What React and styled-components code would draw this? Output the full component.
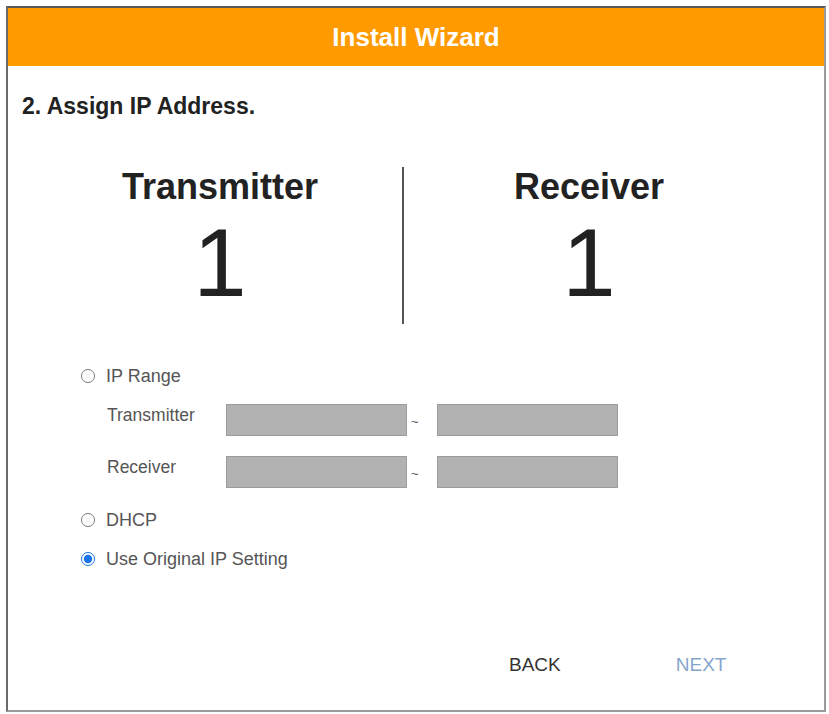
import React from "react";
import styled, { createGlobalStyle } from "styled-components";

const GlobalStyle = createGlobalStyle`
  html, body {
    margin: 0;
    padding: 0;
    background: #ffffff;
  }
  body {
    font-family: "Liberation Sans", Arial, sans-serif;
  }
  * {
    box-sizing: border-box;
  }
`;

const App = () => {
  return (
    <>
      <GlobalStyle />
      <Frame>
        <Header>Install Wizard</Header>

        <Body>
          <StepTitle>2. Assign IP Address.</StepTitle>

          <Counts>
            <CountColumn $width={360}>
              <CountLabel>Transmitter</CountLabel>
              <CountValue>1</CountValue>
            </CountColumn>
            <Divider />
            <CountColumn $width={370}>
              <CountLabel>Receiver</CountLabel>
              <CountValue>1</CountValue>
            </CountColumn>
          </Counts>

          <Options>
            <OptionRow>
              <Radio type="radio" name="ipmode" />
              <OptionText>IP Range</OptionText>
            </OptionRow>

            <RangeRow $top={18}>
              <RangeLabel>Transmitter</RangeLabel>
              <RangeInput disabled />
              <Tilde>~</Tilde>
              <RangeInput disabled />
            </RangeRow>

            <RangeRow $top={20}>
              <RangeLabel>Receiver</RangeLabel>
              <RangeInput disabled />
              <Tilde>~</Tilde>
              <RangeInput disabled />
            </RangeRow>

            <OptionRow $top={22}>
              <Radio type="radio" name="ipmode" />
              <OptionText>DHCP</OptionText>
            </OptionRow>

            <OptionRow $top={19}>
              <Radio type="radio" name="ipmode" defaultChecked />
              <OptionText>Use Original IP Setting</OptionText>
            </OptionRow>
          </Options>
        </Body>

        <Footer>
          <FooterButton>BACK</FooterButton>
          <FooterButton $primary>NEXT</FooterButton>
        </Footer>
      </Frame>
    </>
  );
};

export default App;

const Frame = styled.div`
  margin: 6px 0 0 6px;
  width: 820px;
  height: 706px;
  display: flex;
  flex-direction: column;
  border: 2px solid #9a9a9a;
  border-top-color: #5a5a5a;
  border-left-color: #6a6a6a;
  background: #ffffff;
`;

const Header = styled.div`
  height: 58px;
  background-color: #ff9b00;
  color: #ffffff;
  font-size: 26px;
  font-weight: bold;
  display: flex;
  align-items: center;
  justify-content: center;
`;

const Body = styled.div`
  padding: 26px 0 0 14px;
`;

const StepTitle = styled.h2`
  margin: 0;
  font-size: 23px;
  line-height: 28px;
  font-weight: bold;
  color: #222222;
`;

const Counts = styled.div`
  display: flex;
  margin: 47px 0 0 18px;
`;

const CountColumn = styled.div`
  width: ${(p) => p.$width}px;
  display: flex;
  flex-direction: column;
  align-items: center;
`;

const CountLabel = styled.div`
  font-size: 36px;
  line-height: 40px;
  font-weight: bold;
  color: #222222;
`;

const CountValue = styled.div`
  margin-top: 7px;
  font-size: 96px;
  line-height: 98px;
  color: #222222;
`;

const Divider = styled.div`
  width: 2px;
  height: 157px;
  background: #555555;
  margin-left: 2px;
`;

const Options = styled.div`
  margin: 42px 0 0 59px;
  display: flex;
  flex-direction: column;
`;

const OptionRow = styled.label`
  display: flex;
  align-items: center;
  height: 20px;
  margin-top: ${(p) => p.$top || 0}px;
`;

const Radio = styled.input`
  width: 14px;
  height: 14px;
  margin: 0 11px 0 0;
  accent-color: #1a73e8;
`;

const OptionText = styled.span`
  font-size: 18px;
  color: #555555;
`;

const RangeRow = styled.div`
  display: flex;
  align-items: flex-start;
  margin: ${(p) => p.$top || 0}px 0 0 26px;
`;

const RangeLabel = styled.span`
  width: 119px;
  font-size: 17.5px;
  line-height: 22px;
  color: #555555;
`;

const RangeInput = styled.input`
  width: 181px;
  height: 32px;
  margin: 0;
  border: 1px solid #9c9c9c;
  background: #b2b2b2;
  padding: 0 6px;
`;

const Tilde = styled.span`
  width: 30px;
  padding: 10px 0 0 4px;
  font-size: 13px;
  color: #555555;
`;

const Footer = styled.div`
  margin-top: auto;
  display: flex;
  padding: 0 0 35px 501px;
  gap: 115px;
`;

const FooterButton = styled.span`
  font-size: 19px;
  line-height: 20px;
  color: ${(p) => (p.$primary ? "#86a6cc" : "#333333")};
  cursor: pointer;
`;
